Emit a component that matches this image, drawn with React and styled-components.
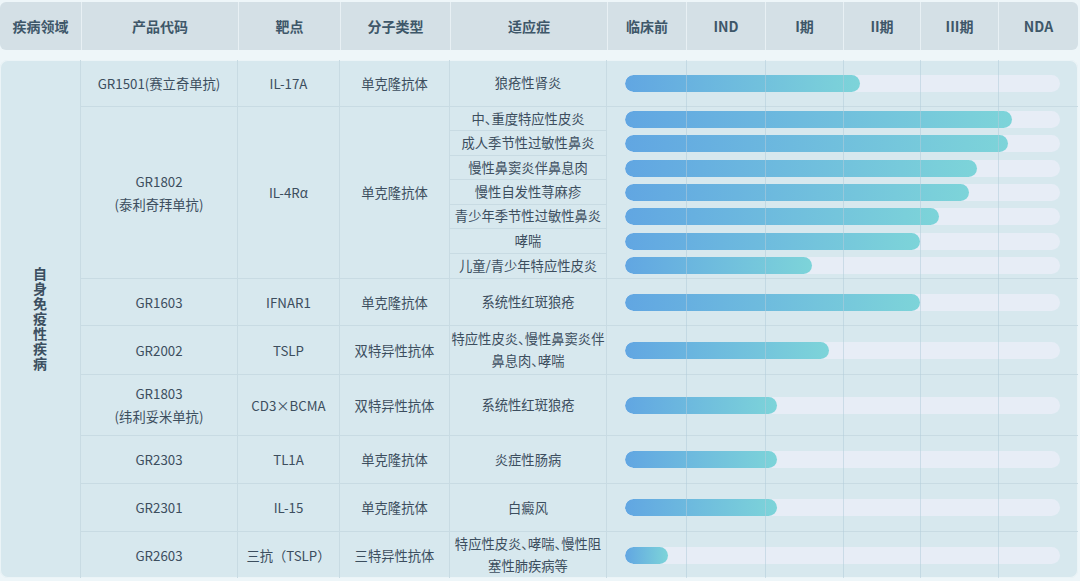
import React from "react";
import styled, { createGlobalStyle } from "styled-components";

const GlobalStyle = createGlobalStyle`
    * { box-sizing: border-box; }
    body {
        margin: 0;
        background: #eef6f9;
        font-family: "Noto Sans CJK SC", "Noto Sans", sans-serif;
    }
`;

const line = "#c8dbe3";

const Page = styled.div`
    width: 1078px;
    padding-top: 2px;
    display: flex;
    flex-direction: column;
    gap: 10px;
`;

const HeaderRow = styled.div`
    display: grid;
    grid-template-columns: 81px 157px 102px 110px 157px 79px 79px 78px 77px 78px 80px;
    height: 48px;
    background: #d4e0e6;
    border-radius: 6px;
    overflow: hidden;
`;

const HeadCell = styled.div`
    display: flex;
    align-items: center;
    justify-content: center;
    font-size: 14px;
    font-weight: 700;
    color: #3e5769;
    & + & {
        border-left: 1px solid #e8f0f4;
    }
`;

const Body = styled.div`
    position: relative;
    display: flex;
    height: 518px;
    background: #d7e8ee;
    border-radius: 8px;
    overflow: hidden;
    box-shadow: inset 0 0 0 1px rgba(255, 255, 255, 0.5);
`;

const Area = styled.div`
    width: 81px;
    flex: none;
    display: flex;
    align-items: center;
    justify-content: center;
    border-right: 1px solid ${line};
    font-size: 14px;
    font-weight: 700;
    color: #3c4f60;
    writing-mode: vertical-rl;
    text-orientation: upright;
    letter-spacing: 1px;
`;

const Groups = styled.div`
    flex: 1;
    display: flex;
    flex-direction: column;
`;

const Group = styled.div`
    display: grid;
    grid-template-columns: 157px 102px 110px 1fr;
    height: ${props => props.$h}px;
    border-bottom: 1px solid ${line};
    &:last-child {
        border-bottom: none;
    }
`;

const Cell = styled.div`
    display: flex;
    flex-direction: column;
    align-items: center;
    justify-content: center;
    text-align: center;
    font-size: 13.3px;
    line-height: 23px;
    color: #3c4e5e;
    border-right: 1px solid ${line};
    white-space: nowrap;
`;

// the 、 in the source is set half width
const Punct = styled.span`
    font-feature-settings: "halt";
`;

const Indications = styled.div`
    display: flex;
    flex-direction: column;
`;

const IndRow = styled.div`
    flex: 1;
    display: grid;
    grid-template-columns: 157px 1fr;
`;

const IndCell = styled(Cell)`
    line-height: 22px;
    border-bottom: ${props => (props.$divider ? `1px solid ${line}` : "none")};
`;

const BarCell = styled.div`
    display: flex;
    align-items: center;
    padding: 0 18px;
`;

const Track = styled.div`
    flex: 1;
    height: 17px;
    border-radius: 9px;
    background: #e7edf6;
    overflow: hidden;
`;

const Fill = styled.div`
    height: 100%;
    border-radius: 9px;
    background: linear-gradient(90deg, #61a6e2, #7dd4d9);
`;

const StageLines = styled.div`
    position: absolute;
    top: 0;
    bottom: 0;
    left: 607px;
    right: 0;
    display: grid;
    grid-template-columns: 79px 79px 78px 77px 78px 80px;
    pointer-events: none;
    & > div + div {
        border-left: 1px solid rgba(178, 204, 218, 0.55);
    }
`;

const heads = ["疾病领域", "产品代码", "靶点", "分子类型", "适应症", "临床前", "IND", "I期", "II期", "III期", "NDA"];

const groups = [
    { code: ["GR1501(赛立奇单抗)"], target: "IL-17A", type: "单克隆抗体", h: 47, items: [[["狼疮性肾炎"], 235]] },
    {
        code: ["GR1802", "(泰利奇拜单抗)"],
        target: "IL-4Rα",
        type: "单克隆抗体",
        h: 172,
        items: [
            [["中、重度特应性皮炎"], 387],
            [["成人季节性过敏性鼻炎"], 383],
            [["慢性鼻窦炎伴鼻息肉"], 352],
            [["慢性自发性荨麻疹"], 344],
            [["青少年季节性过敏性鼻炎"], 314],
            [["哮喘"], 295],
            [["儿童/青少年特应性皮炎"], 187]
        ]
    },
    { code: ["GR1603"], target: "IFNAR1", type: "单克隆抗体", h: 47, items: [[["系统性红斑狼疮"], 295]] },
    { code: ["GR2002"], target: "TSLP", type: "双特异性抗体", h: 49, items: [[["特应性皮炎、慢性鼻窦炎伴", "鼻息肉、哮喘"], 204]] },
    { code: ["GR1803", "(纬利妥米单抗)"], target: "CD3×BCMA", type: "双特异性抗体", h: 61, items: [[["系统性红斑狼疮"], 152]] },
    { code: ["GR2303"], target: "TL1A", type: "单克隆抗体", h: 48, items: [[["炎症性肠病"], 152]] },
    { code: ["GR2301"], target: "IL-15", type: "单克隆抗体", h: 48, items: [[["白癜风"], 152]] },
    { code: ["GR2603"], target: "三抗（TSLP）", type: "三特异性抗体", h: 46, items: [[["特应性皮炎、哮喘、慢性阻", "塞性肺疾病等"], 43]] }
];

function withPunct(t) {
    const parts = t.split("、");
    return parts.map((p, i) => (
        <React.Fragment key={i}>
            {p}
            {i < parts.length - 1 && <Punct>、</Punct>}
        </React.Fragment>
    ));
}

function Lines({ text }) {
    return text.map(t => <div key={t}>{withPunct(t)}</div>);
}

export default function App() {
    return (
        <Page>
            <GlobalStyle />
            <HeaderRow>
                {heads.map(h => (
                    <HeadCell key={h}>{h}</HeadCell>
                ))}
            </HeaderRow>
            <Body>
                <Area>自身免疫性疾病</Area>
                <Groups>
                    {groups.map(g => (
                        <Group key={g.code[0]} $h={g.h}>
                            <Cell>
                                <Lines text={g.code} />
                            </Cell>
                            <Cell>{g.target}</Cell>
                            <Cell>{g.type}</Cell>
                            <Indications>
                                {g.items.map(([name, w], i) => (
                                    <IndRow key={name[0]}>
                                        <IndCell $divider={i < g.items.length - 1}>
                                            <Lines text={name} />
                                        </IndCell>
                                        <BarCell>
                                            <Track>
                                                <Fill style={{ width: w }} />
                                            </Track>
                                        </BarCell>
                                    </IndRow>
                                ))}
                            </Indications>
                        </Group>
                    ))}
                </Groups>
                <StageLines>
                    <div />
                    <div />
                    <div />
                    <div />
                    <div />
                    <div />
                </StageLines>
            </Body>
        </Page>
    );
}
